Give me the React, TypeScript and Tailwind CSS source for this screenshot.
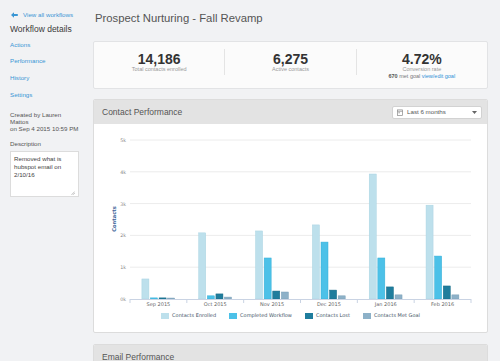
import React from "react";

const COLORS = ["#bde0ec", "#4cc1e8", "#1f7d9d", "#8db1c8"];
const STROKES = ["#a9d3e2", "#36afd8", "#176a86", "#7a9fb7"];
const LEGEND = ["Contacts Enrolled", "Completed Workflow", "Contacts Lost", "Contacts Met Goal"];
const CHART_FONT = "'DejaVu Sans', Verdana, sans-serif";

const data = [
  { m: "Sep 2015", v: [630, 35, 35, 30] },
  { m: "Oct 2015", v: [2080, 100, 160, 60] },
  { m: "Nov 2015", v: [2140, 1290, 250, 220] },
  { m: "Dec 2015", v: [2330, 1790, 280, 100] },
  { m: "Jan 2016", v: [3930, 1290, 380, 130] },
  { m: "Feb 2016", v: [2950, 1350, 410, 130] },
];

function Chart() {
  const x0 = 36;
  const x1 = 377;
  const y0 = 175;
  const scale = 159 / 5000;
  const catW = (x1 - x0) / 6;
  const ticks = [0, 1, 2, 3, 4, 5];
  return (
    <svg width={393} height={185} className="block">
      {ticks.map((t) => {
        const y = y0 - t * 1000 * scale;
        return (
          <g key={t}>
            {t > 0 && <line x1={x0} x2={x1} y1={y} y2={y} stroke="#ececec" strokeWidth={1} />}
            <text x={32} y={y + 2} textAnchor="end" fontSize={4.8} fill="#8a8a8a" fontFamily={CHART_FONT}>
              {t}k
            </text>
          </g>
        );
      })}
      <text
        transform="translate(21.5 95) rotate(-90)"
        textAnchor="middle"
        fontSize={5.2}
        fill="#41679a"
        fontWeight={700}
        fontFamily={CHART_FONT}
      >
        Contacts
      </text>
      {data.map((d, i) => {
        const gx = x0 + i * catW + 11.9;
        return (
          <g key={d.m}>
            {d.v.map((v, j) => {
              const h = v * scale;
              return (
                <rect
                  key={j}
                  x={gx + j * 8.6}
                  y={y0 - h}
                  width={7}
                  height={h}
                  fill={COLORS[j]}
                  stroke={STROKES[j]}
                  strokeWidth={0.5}
                />
              );
            })}
            <text
              x={x0 + i * catW + catW / 2}
              y={182}
              textAnchor="middle"
              fontSize={5}
              fill="#666"
              fontFamily={CHART_FONT}
            >
              {d.m}
            </text>
          </g>
        );
      })}
      <line x1={x0} x2={x1} y1={y0 + 0.5} y2={y0 + 0.5} stroke="#c9d3e3" strokeWidth={1} />
      {[0, 1, 2, 3, 4, 5, 6].map((i) => (
        <line key={i} x1={x0 + i * catW} x2={x0 + i * catW} y1={y0} y2={y0 + 4} stroke="#c9d3e3" strokeWidth={1} />
      ))}
    </svg>
  );
}

export default function App() {
  return (
    <div className="flex w-[500px] h-[361px] overflow-hidden bg-[#f1f2f4] font-['Liberation_Sans',Arial,sans-serif] text-[#444]">
      {/* Sidebar */}
      <div className="w-[93px] shrink-0 pl-[10px] pt-[11px] flex flex-col">
        <div className="flex items-center h-[8px] pl-[1px]">
          <svg width="7" height="6" viewBox="0 0 7 6" className="mr-[5px]">
            <path d="M0 3 L3 0.2 L3 2 L6.8 2 L6.8 4 L3 4 L3 5.8 Z" fill="#3a96d4" />
          </svg>
          <span className="text-[6.2px] leading-[8px] text-[#3a96d4]">View all workflows</span>
        </div>
        <div className="mt-[5px] text-[8.5px] leading-[10px] text-[#3a3a3a]">Workflow details</div>
        <div className="mt-[2.7px] flex flex-col text-[6.2px] text-[#3a96d4]">
          <span className="h-[16.67px] leading-[16.67px]">Actions</span>
          <span className="h-[16.67px] leading-[16.67px]">Performance</span>
          <span className="h-[16.67px] leading-[16.67px]">History</span>
          <span className="h-[16.67px] leading-[16.67px]">Settings</span>
        </div>
        <div className="mt-[7.2px] text-[6.2px] leading-[7px] text-[#555]">
          Created by Lauren
          <br />
          Mattos
          <br />
          on Sep 4 2015 10:59 PM
        </div>
        <div className="mt-[8.5px] text-[6.2px] leading-[8px] text-[#555]">Description</div>
        <div className="mt-[3px] w-[69px] h-[46px] bg-white border border-[#dcdcdc] px-[3px] pt-[3px] text-[6.2px] leading-[8px] text-[#444] flex flex-col justify-between">
          <div>
            Removed what is
            <br />
            hubspot email on
            <br />
            2/10/16
          </div>
          <div className="flex justify-end pb-[1px]">
            <svg width="4" height="4" viewBox="0 0 4 4">
              <path d="M0.5 3.8 L3.8 0.5 M2 3.8 L3.8 2" stroke="#999" strokeWidth="0.6" />
            </svg>
          </div>
        </div>
      </div>

      {/* Main */}
      <div className="w-[395px] shrink-0 pt-[11px] flex flex-col">
        <div className="pl-[2px] text-[11.3px] leading-[14px] text-[#555]">Prospect Nurturing - Fall Revamp</div>

        {/* Stats */}
        <div className="mt-[16px] h-[48px] shrink-0 bg-[#fbfbfb] border border-[#e2e3e5] rounded-[2px] flex items-start py-[7px]">
          <div className="flex-1 flex flex-col items-center pt-[3px]">
            <div className="text-[14px] leading-[14px] font-bold text-[#333]">14,186</div>
            <div className="text-[5.5px] leading-[6px] text-[#999]">Total contacts enrolled</div>
          </div>
          <div className="w-px h-[26px] bg-[#e4e4e4]" />
          <div className="flex-1 flex flex-col items-center pt-[3px]">
            <div className="text-[14px] leading-[14px] font-bold text-[#333]">6,275</div>
            <div className="text-[5.5px] leading-[6px] text-[#999]">Active contacts</div>
          </div>
          <div className="w-px h-[26px] bg-[#e4e4e4]" />
          <div className="flex-1 flex flex-col items-center pt-[3px]">
            <div className="text-[14px] leading-[14px] font-bold text-[#333]">4.72%</div>
            <div className="text-[5.5px] leading-[6px] text-[#999]">Conversion rate</div>
            <div className="mt-[1px] text-[5.5px] leading-[6px] text-[#777]">
              <span className="font-bold text-[#555]">670</span> met goal <span className="text-[#2f8fd6]">view/edit goal</span>
            </div>
          </div>
        </div>

        {/* Contact Performance */}
        <div className="mt-[10px] shrink-0 border border-[#dcdcdc] rounded-[2px] bg-white overflow-hidden">
          <div className="h-[24px] bg-[#e3e3e3] flex items-center justify-between pl-[8px] pr-[5px]">
            <span className="text-[8.5px] text-[#555]">Contact Performance</span>
            <div className="w-[90px] h-[13px] bg-white border border-[#d2d2d2] rounded-[2px] flex items-center pl-[4px] pr-[4px]">
              <svg width="6" height="7" viewBox="0 0 6 7" className="mr-[4px]">
                <rect x="0.4" y="0.9" width="5.2" height="5.7" fill="none" stroke="#888" strokeWidth="0.7" />
                <line x1="0.4" y1="2.3" x2="5.6" y2="2.3" stroke="#888" strokeWidth="0.7" />
                <rect x="1.5" y="3.2" width="1.2" height="1.1" fill="#888" />
              </svg>
              <span className="text-[6.2px] text-[#555] flex-1">Last 6 months</span>
              <svg width="5" height="3" viewBox="0 0 5 3">
                <path d="M0 0 L5 0 L2.5 3 Z" fill="#666" />
              </svg>
            </div>
          </div>
          <div className="h-[208px] flex flex-col">
            <Chart />
            <div className="h-[14px] flex items-center justify-center gap-[13px] text-[5px] text-[#3f5466] font-['DejaVu_Sans',Verdana,sans-serif]">
              {LEGEND.map((l, i) => (
                <div key={l} className="flex items-center gap-[2px]">
                  {i === 0 && <span className="w-[8px] h-[6px] bg-[#bde0ec]" />}
                  {i === 1 && <span className="w-[8px] h-[6px] bg-[#4cc1e8]" />}
                  {i === 2 && <span className="w-[8px] h-[6px] bg-[#1f7d9d]" />}
                  {i === 3 && <span className="w-[8px] h-[6px] bg-[#8db1c8]" />}
                  <span className="ml-[1px]">{l}</span>
                </div>
              ))}
            </div>
          </div>
        </div>

        {/* Email Performance */}
        <div className="mt-[11px] shrink-0 border border-[#dcdcdc] rounded-[2px] bg-white overflow-hidden">
          <div className="h-[24px] bg-[#e3e3e3] flex items-center pl-[8px]">
            <span className="text-[8.5px] text-[#555]">Email Performance</span>
          </div>
          <div className="h-[40px]" />
        </div>
      </div>
    </div>
  );
}
